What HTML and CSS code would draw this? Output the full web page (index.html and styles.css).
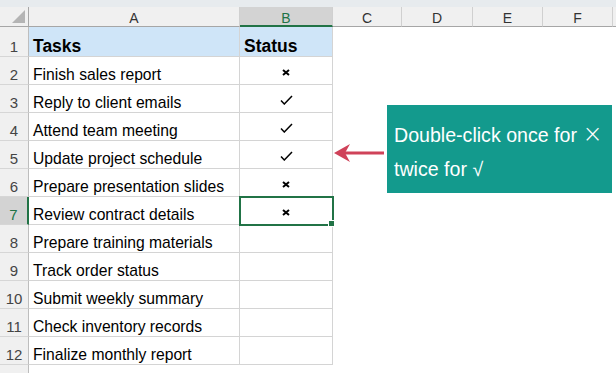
FILE: index.html
```html
<!DOCTYPE html>
<html lang="en">
<head>
    <meta charset="UTF-8">
    <title>Task status</title>
    <link rel="stylesheet" href="styles.css">
</head>
<body>
    <div class="topbar"></div>
    <div class="sheet">
        <div class="corner"><span class="tri"></span></div>
        <div class="colhead">A</div>
        <div class="colhead sel">B</div>
        <div class="colhead">C</div>
        <div class="colhead">D</div>
        <div class="colhead">E</div>
        <div class="colhead">F</div>
        <div class="colhead last"></div>

        <div class="num head">1</div>
        <div class="cell title">Tasks</div>
        <div class="cell title">Status</div>
        <div class="rest"></div>

        <div class="num">2</div>
        <div class="cell">Finish sales report</div>
        <div class="cell mark"><svg class="ico-x" viewBox="0 0 8 7"><path d="M1 1L7 6M7 1L1 6"/></svg></div>
        <div class="rest"></div>

        <div class="num">3</div>
        <div class="cell">Reply to client emails</div>
        <div class="cell mark"><svg class="ico-ok" viewBox="0 0 13 10"><path d="M1 5.5L4.3 9L12 1"/></svg></div>
        <div class="rest"></div>

        <div class="num">4</div>
        <div class="cell">Attend team meeting</div>
        <div class="cell mark"><svg class="ico-ok" viewBox="0 0 13 10"><path d="M1 5.5L4.3 9L12 1"/></svg></div>
        <div class="rest"></div>

        <div class="num">5</div>
        <div class="cell">Update project schedule</div>
        <div class="cell mark"><svg class="ico-ok" viewBox="0 0 13 10"><path d="M1 5.5L4.3 9L12 1"/></svg></div>
        <div class="rest"></div>

        <div class="num">6</div>
        <div class="cell">Prepare presentation slides</div>
        <div class="cell mark"><svg class="ico-x" viewBox="0 0 8 7"><path d="M1 1L7 6M7 1L1 6"/></svg></div>
        <div class="rest"></div>

        <div class="num sel">7</div>
        <div class="cell">Review contract details</div>
        <div class="cell mark active"><svg class="ico-x" viewBox="0 0 8 7"><path d="M1 1L7 6M7 1L1 6"/></svg></div>
        <div class="rest"></div>

        <div class="num">8</div>
        <div class="cell">Prepare training materials</div>
        <div class="cell"></div>
        <div class="rest"></div>

        <div class="num">9</div>
        <div class="cell">Track order status</div>
        <div class="cell"></div>
        <div class="rest"></div>

        <div class="num">10</div>
        <div class="cell">Submit weekly summary</div>
        <div class="cell"></div>
        <div class="rest"></div>

        <div class="num">11</div>
        <div class="cell">Check inventory records</div>
        <div class="cell"></div>
        <div class="rest"></div>

        <div class="num">12</div>
        <div class="cell">Finalize monthly report</div>
        <div class="cell"></div>
        <div class="rest"></div>

        <div class="num">13</div>
        <div class="cell blank"></div>
        <div class="cell blank"></div>
        <div class="rest"></div>
    </div>

    <!-- callout over the sheet -->
    <svg class="arrow" viewBox="0 0 52 20">
        <path d="M4 10H50" stroke="#cf4259" stroke-width="3"/>
        <path d="M0 10L16 1L11 10L16 19Z" fill="#cf4259"/>
    </svg>
    <div class="callout">
        <p>Double-click once for <span class="times">&times;</span></p>
        <p>twice for &#x221A;</p>
    </div>
</body>
</html>
```

FILE: styles.css
```css
* {
  box-sizing: border-box;
}

body {
  margin: 0;
  width: 616px;
  height: 373px;
  overflow: hidden;
  background: #fff;
  font-family: "Liberation Sans", Arial, sans-serif;
  position: relative;
}

.topbar {
  height: 7px;
  background: #e7ebee;
}

.sheet {
  display: grid;
  grid-template-columns: 29px 211px 93px 69px 71px 70px 70px 1fr;
  grid-template-rows: 20px 30px repeat(12, 28px);
  grid-auto-rows: 28px;
}

/* column headers */
.corner,
.colhead {
  background: #f0f0f0;
  border-bottom: 1px solid #a6a6a6;
  border-right: 1px solid #d0d0d0;
}

.corner {
  position: relative;
  border-right-color: #a6a6a6;
}

.corner .tri {
  position: absolute;
  right: 3px;
  bottom: 3px;
  width: 0;
  height: 0;
  border-left: 13px solid transparent;
  border-bottom: 13px solid #b4b4b4;
}

.colhead {
  font-size: 14px;
  color: #333;
  text-align: center;
  line-height: 19px;
  padding-top: 2px;
}

.colhead.sel {
  background: #d3d3d3;
  color: #217346;
  border-bottom: 2px solid #217346;
  padding-top: 3px;
  line-height: 17px;
}

.colhead.last {
  border-right: none;
}

/* row numbers */
.num {
  background: #f0f0f0;
  border-right: 1px solid #bdbdbd;
  border-bottom: 1px solid #d6d6d6;
  color: #444;
  font-size: 15px;
  text-align: center;
  display: flex;
  align-items: flex-end;
  justify-content: center;
  line-height: 18px;
}

.num.sel {
  background: #d3d3d3;
  color: #217346;
  border-right: 2px solid #217346;
}

/* cells */
.cell {
  border-right: 1px solid #d4d4d4;
  border-bottom: 1px solid #d4d4d4;
  font-size: 15.7px;
  color: #000;
  padding-left: 4px;
  display: flex;
  align-items: flex-end;
  line-height: 18px;
  white-space: nowrap;
}

.cell.title {
  background: #cfe5f8;
  font-weight: bold;
  font-size: 17.5px;
  line-height: 20px;
}

.cell.blank {
  border: none;
}

.cell.mark {
  justify-content: center;
  align-items: center;
  padding: 3px 0 0 0;
}

.cell.active {
  position: relative;
  outline: 2px solid #217346;
  outline-offset: -1px;
}

.cell.active::after {
  content: "";
  position: absolute;
  right: -3px;
  bottom: -3px;
  width: 5px;
  height: 5px;
  background: #217346;
  border: 1px solid #fff;
}

.rest {
  grid-column: 4 / -1;
}

.ico-x {
  width: 8px;
  height: 7px;
  fill: none;
  stroke: #000;
  stroke-width: 2;
}

.ico-ok {
  width: 13px;
  height: 10px;
  fill: none;
  stroke: #000;
  stroke-width: 1.5;
}

/* callout */
.arrow {
  position: absolute;
  left: 334px;
  top: 143px;
  width: 52px;
  height: 20px;
}

.callout {
  position: absolute;
  left: 387px;
  top: 105px;
  width: 225px;
  height: 88px;
  background: #139a8d;
  color: #fff;
  padding: 13px 0 0 7px;
  font-size: 19.6px;
}

.callout p {
  margin: 0;
  line-height: 34px;
  white-space: nowrap;
}

.callout .times {
  font-family: "DejaVu Sans", sans-serif;
  font-size: 24px;
  font-weight: 200;
  line-height: 0;
}
```
